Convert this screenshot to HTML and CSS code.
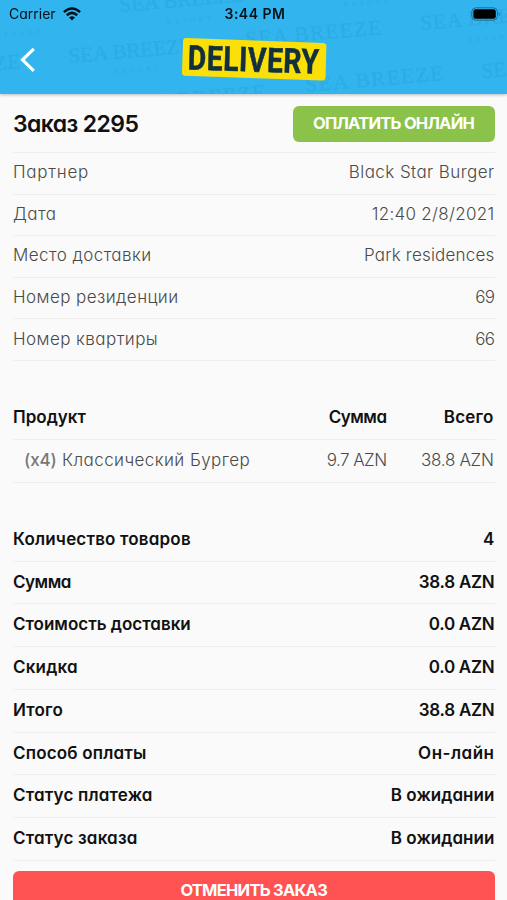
FILE: index.html
```html
<!DOCTYPE html>
<html lang="ru">
<head>
<meta charset="utf-8">
<title>Заказ 2295</title>
<link rel="stylesheet" href="styles.css">
</head>
<body>
<header class="header">
  <svg class="pattern" width="507" height="94" viewBox="0 0 507 94" aria-hidden="true">
    <g class="mark">
      <text transform="translate(69 63) rotate(-5)" textLength="124">SEA BREEZE</text>
      <text transform="translate(120 12) rotate(-5)" textLength="124">SEA BREEZE</text>
      <text transform="translate(246 46) rotate(-5)" textLength="136">SEA BREEZE</text>
      <text transform="translate(306 92) rotate(-5)" textLength="138">SEA BREEZE</text>
      <text transform="translate(421 30) rotate(-5)" textLength="132">SEA BREEZE</text>
      <text transform="translate(482 78) rotate(-5)" textLength="124">SEA BREEZE</text>
      <text transform="translate(-103 79) rotate(-5)" textLength="124">SEA BREEZE</text>
      <text transform="translate(128 111) rotate(-5)" textLength="138">SEA BREEZE</text>
    </g>
    <g class="submark">
      <text transform="translate(115 74) rotate(-5)" textLength="44">RESORT</text>
      <text transform="translate(167 24) rotate(-5)" textLength="44">RESORT</text>
      <text transform="translate(344 7) rotate(-5)" textLength="44">RESORT</text>
      <text transform="translate(468 42) rotate(-5)" textLength="44">RESORT</text>
      <text transform="translate(-4 38) rotate(-5)" textLength="44">RESORT</text>
    </g>
  </svg>
  <div class="status">
    <div class="carrier">
      <span>Carrier</span>
      <svg width="18" height="14" viewBox="0 0 18 14" aria-hidden="true">
        <g fill="none" stroke="#05121a" stroke-width="2.5">
          <path d="M.9 5.2Q9-2.2 17.1 5.2"/>
          <path d="M3.8 8.2Q9 3.6 14.2 8.2"/>
        </g>
        <path fill="#05121a" d="M6 10.4Q9 8 12 10.4L9 13.5Z"/>
      </svg>
    </div>
    <span class="clock">3:44 PM</span>
    <svg class="battery" width="30" height="14" viewBox="0 0 30 14" aria-hidden="true">
      <rect x=".8" y=".8" width="25.6" height="12.4" rx="4" fill="none" stroke="#1b7099" stroke-width="1"/>
      <rect x="2.4" y="2.3" width="22.4" height="9.4" rx="2.2" fill="#000"/>
      <path d="M27.7 4.7Q30 7 27.7 9.3Z" fill="#1b7099"/>
    </svg>
  </div>
  <div class="nav">
    <svg class="back" width="16" height="26" viewBox="0 0 16 26" aria-hidden="true">
      <path d="M13.8 1.800L2.500 12.800L13.800 23.800" fill="none" stroke="#fff" stroke-width="3.2"/>
    </svg>
    <svg class="logo" width="148" height="46" viewBox="0 0 148 46" aria-label="DELIVERY">
      <path d="M6 2L143 6.900Q146.500 7.100 146.400 10L145.500 41.500Q145.300 44.700 142 44.500L5 39.700Q1.900 39.500 2 36.500L3 5Q3.200 2 6 2Z" fill="#fae008"/>
      <text class="logo-text" transform="translate(7.500 33.500) rotate(1.800) scale(.83 1)" textLength="158">DELIVERY</text>
    </svg>
  </div>
</header>
<main class="order">
  <div class="title-row">
    <h1 class="title">Заказ 2295</h1>
    <button class="pay">ОПЛАТИТЬ ОНЛАЙН</button>
  </div>
  <section class="details">
    <div class="row"><span class="partner">Партнер</span><span>Black Star Burger</span></div>
    <div class="row"><span>Дата</span><span class="date">12:40 2/8/2021</span></div>
    <div class="row"><span>Место доставки</span><span class="place">Park residences</span></div>
    <div class="row"><span>Номер резиденции</span><span class="num">69</span></div>
    <div class="row"><span>Номер квартиры</span><span class="num">66</span></div>
  </section>
  <section class="products">
    <div class="product head"><span>Продукт</span><span class="sum">Сумма</span><span class="total">Всего</span></div>
    <div class="product item"><span class="name"><b>(x4)</b> Классический Бургер</span><span class="num">9.7 AZN</span><span class="num wide">38.8 AZN</span></div>
  </section>
  <section class="totals">
    <div class="row"><span>Количество товаров</span><span>4</span></div>
    <div class="row"><span class="sum">Сумма</span><span class="num">38.8 AZN</span></div>
    <div class="row"><span class="cost">Стоимость доставки</span><span class="num">0.0 AZN</span></div>
    <div class="row"><span>Скидка</span><span class="num">0.0 AZN</span></div>
    <div class="row"><span>Итого</span><span class="num">38.8 AZN</span></div>
    <div class="row"><span>Способ оплаты</span><span class="online">Он-лайн</span></div>
    <div class="row"><span>Статус платежа</span><span class="state">В ожидании</span></div>
    <div class="row"><span>Статус заказа</span><span class="state">В ожидании</span></div>
  </section>
  <button class="cancel">ОТМЕНИТЬ ЗАКАЗ</button>
</main>
</body>
</html>
```
FILE: styles.css
```css
* { box-sizing: border-box; }
body {
  margin: 0;
  height: 900px;
  overflow: hidden;
  background: #fafafa;
  color: #111;
  font-family: Inter, "Open Sans", sans-serif;
  font-feature-settings: "cv11";
}
.header {
  position: relative;
  height: 94px;
  background: #32b5ee;
  box-shadow: 0 1px 3px rgba(0, 0, 0, .25);
}
.pattern { position: absolute; inset: 0; overflow: hidden; }
.mark, .submark { font-family: "Liberation Serif", serif; fill: #218fc9; }
.mark { font-size: 21px; opacity: .24; stroke: #218fc9; stroke-width: .4px; }
.submark { font-size: 7px; opacity: .3; }
.status {
  position: relative;
  display: grid;
  grid-template-columns: 1fr auto 1fr;
  align-items: center;
  height: 27px;
  padding: 0 6px 0 9px;
  color: #05121a;
  font-size: 14px;
}
.carrier { display: flex; align-items: center; gap: 7px; }
.clock { font-weight: 600; letter-spacing: .5px; }
.battery { justify-self: end; }
.nav {
  position: relative;
  display: grid;
  grid-template-columns: 160px 148px 1fr;
  height: 67px;
  padding: 9px 20px 0;
}
.back { margin-top: 11px; }
.logo-text { font: 700 34px Roboto, sans-serif; fill: #12303d; stroke: #12303d; stroke-width: .6px; }
.order { padding: 0 12.500px 0 13px; }
.title-row {
  display: flex;
  justify-content: space-between;
  align-items: center;
  height: 59px;
  border-bottom: 1px solid #eee;
}
.title { margin: 1px 0 0; font-size: 23px; font-weight: 600; letter-spacing: -.6px; }
.pay, .cancel {
  border: 0;
  border-radius: 6px;
  color: #fff;
  font: 700 16.500px Inter, sans-serif;
  letter-spacing: -.75px;
}
.pay { width: 202px; height: 36px; margin-top: 2px; padding: 0 0 2px; background: #8bc34a; }
.row {
  display: flex;
  justify-content: space-between;
  align-items: center;
  height: 41.600px;
  padding-bottom: 2px;
  border-bottom: 1px solid #eee;
  font-size: 17px;
  white-space: nowrap;
}
.details { color: #4a4a4a; font-weight: 300; letter-spacing: .43px; }
.details .partner { letter-spacing: .75px; }
.details .date { letter-spacing: .3px; }
.details .place { letter-spacing: .2px; }
.products { margin-top: 34px; }
.product {
  display: grid;
  grid-template-columns: 1fr 100px 107px;
  align-items: center;
  height: 43px;
  padding-bottom: 2px;
  border-bottom: 1px solid #eee;
  font-size: 17px;
  text-align: right;
  white-space: nowrap;
}
.product span:first-child { text-align: left; }
.product.head { height: 45px; padding-bottom: 0; font-weight: 600; }
.product.item { color: #4a4a4a; font-weight: 300; }
.product .name { padding-left: 11px; letter-spacing: .42px; }
.name b { color: #777; font-weight: 500; letter-spacing: -.1px; }
.item .num { padding-right: 1px; letter-spacing: -.55px; }
.item .wide { letter-spacing: -.3px; }
.details .num { letter-spacing: -.6px; }
.head .sum { padding-right: 1px; }
.head .sum, .totals .sum { letter-spacing: -.5px; }
.head .total { padding-right: 1px; letter-spacing: .2px; }
.totals { margin-top: 36px; font-weight: 600; letter-spacing: .18px; }
.totals .row { height: 42.750px; }
.totals .num { letter-spacing: -.25px; }
.totals .cost { letter-spacing: 0; }
.totals .online { letter-spacing: .5px; }
.totals .state { letter-spacing: .05px; }
.cancel { display: block; width: 100%; height: 40px; margin-top: 10px; padding: 0 0 2px; background: #ff5252; }
```
